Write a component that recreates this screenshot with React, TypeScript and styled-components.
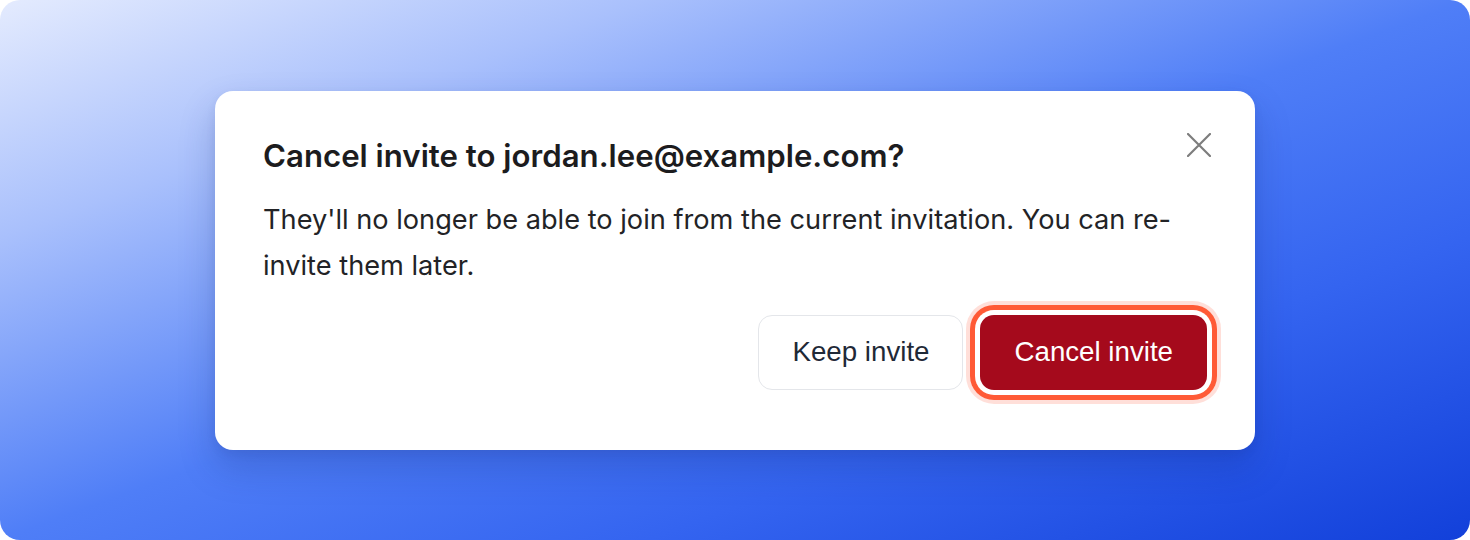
import React from "react";
import styled, { createGlobalStyle } from "styled-components";

const Global = createGlobalStyle`
  html, body { margin: 0; padding: 0; background: #ffffff; }
  body { font-family: Inter, "Noto Sans", sans-serif; }
  * { box-sizing: border-box; }
`;

const Frame = styled.div`
  width: 1470px;
  height: 540px;
  border-radius: 20px;
  overflow: hidden;
  display: flex;
  align-items: center;
  justify-content: center;
  background: linear-gradient(
    to bottom right,
    #e4ebfe 0%,
    #a9c0fc 22%,
    #4f7ef7 50%,
    #3464f0 72%,
    #1240da 100%
  );
`;

const Dialog = styled.div`
  width: 1040px;
  background: #ffffff;
  border-radius: 18px;
  padding: 48px 48px 60px 48px;
  box-shadow: 0 18px 36px rgba(20, 40, 120, 0.22), 0 4px 10px rgba(20, 40, 120, 0.08);
  display: flex;
  flex-direction: column;
`;

const Header = styled.div`
  display: flex;
  align-items: flex-start;
  justify-content: space-between;
`;

const Title = styled.h2`
  margin: 0;
  font-family: Inter, "Noto Sans", sans-serif;
  font-weight: 600;
  font-size: 31.2px;
  line-height: 34px;
  color: #1c1c1e;
`;

const CloseButton = styled.button`
  width: 24px;
  height: 24px;
  margin: -6px -4px 0 0;
  padding: 0;
  border: none;
  background: transparent;
  display: flex;
  align-items: center;
  justify-content: center;
  color: #7d7d7d;
  cursor: pointer;
`;

const Body = styled.p`
  margin: 24px 0 0 0;
  font-family: Inter, "Noto Sans", sans-serif;
  font-weight: 400;
  font-size: 27.2px;
  line-height: 46px;
  color: #222326;
`;

const Footer = styled.div`
  margin-top: 26px;
  display: flex;
  justify-content: flex-end;
  gap: 17px;
`;

const Button = styled.button<{ $variant: "secondary" | "danger" }>`
  height: 75px;
  padding: 0 ${(p) => (p.$variant === "danger" ? "34px" : "33px")};
  border-radius: 14px;
  font-family: "Liberation Sans", Arial, sans-serif;
  font-size: 27.7px;
  cursor: pointer;
  border: ${(p) => (p.$variant === "danger" ? "none" : "1px solid #e4e6ea")};
  background: ${(p) => (p.$variant === "danger" ? "#a50a1c" : "#ffffff")};
  color: ${(p) => (p.$variant === "danger" ? "#ffffff" : "#1f2937")};
  box-shadow: ${(p) =>
    p.$variant === "danger"
      ? "0 0 0 5px #ffffff, 0 0 0 10px #ff5a36, 0 0 0 14px rgba(255, 110, 80, 0.22)"
      : "none"};
`;

function XIcon() {
  return (
    <svg width="24" height="24" viewBox="0 0 24 24" fill="none">
      <path d="M1 1 L23 23 M23 1 L1 23" stroke="currentColor" strokeWidth="2.2" strokeLinecap="round" />
    </svg>
  );
}

export default function App() {
  return (
    <>
      <Global />
      <Frame>
        <Dialog role="dialog" aria-modal="true">
          <Header>
            <Title>Cancel invite to jordan.lee@example.com?</Title>
            <CloseButton aria-label="Close">
              <XIcon />
            </CloseButton>
          </Header>
          <Body>
            They'll no longer be able to join from the current invitation. You can re-invite them later.
          </Body>
          <Footer>
            <Button $variant="secondary">Keep invite</Button>
            <Button $variant="danger">Cancel invite</Button>
          </Footer>
        </Dialog>
      </Frame>
    </>
  );
}
